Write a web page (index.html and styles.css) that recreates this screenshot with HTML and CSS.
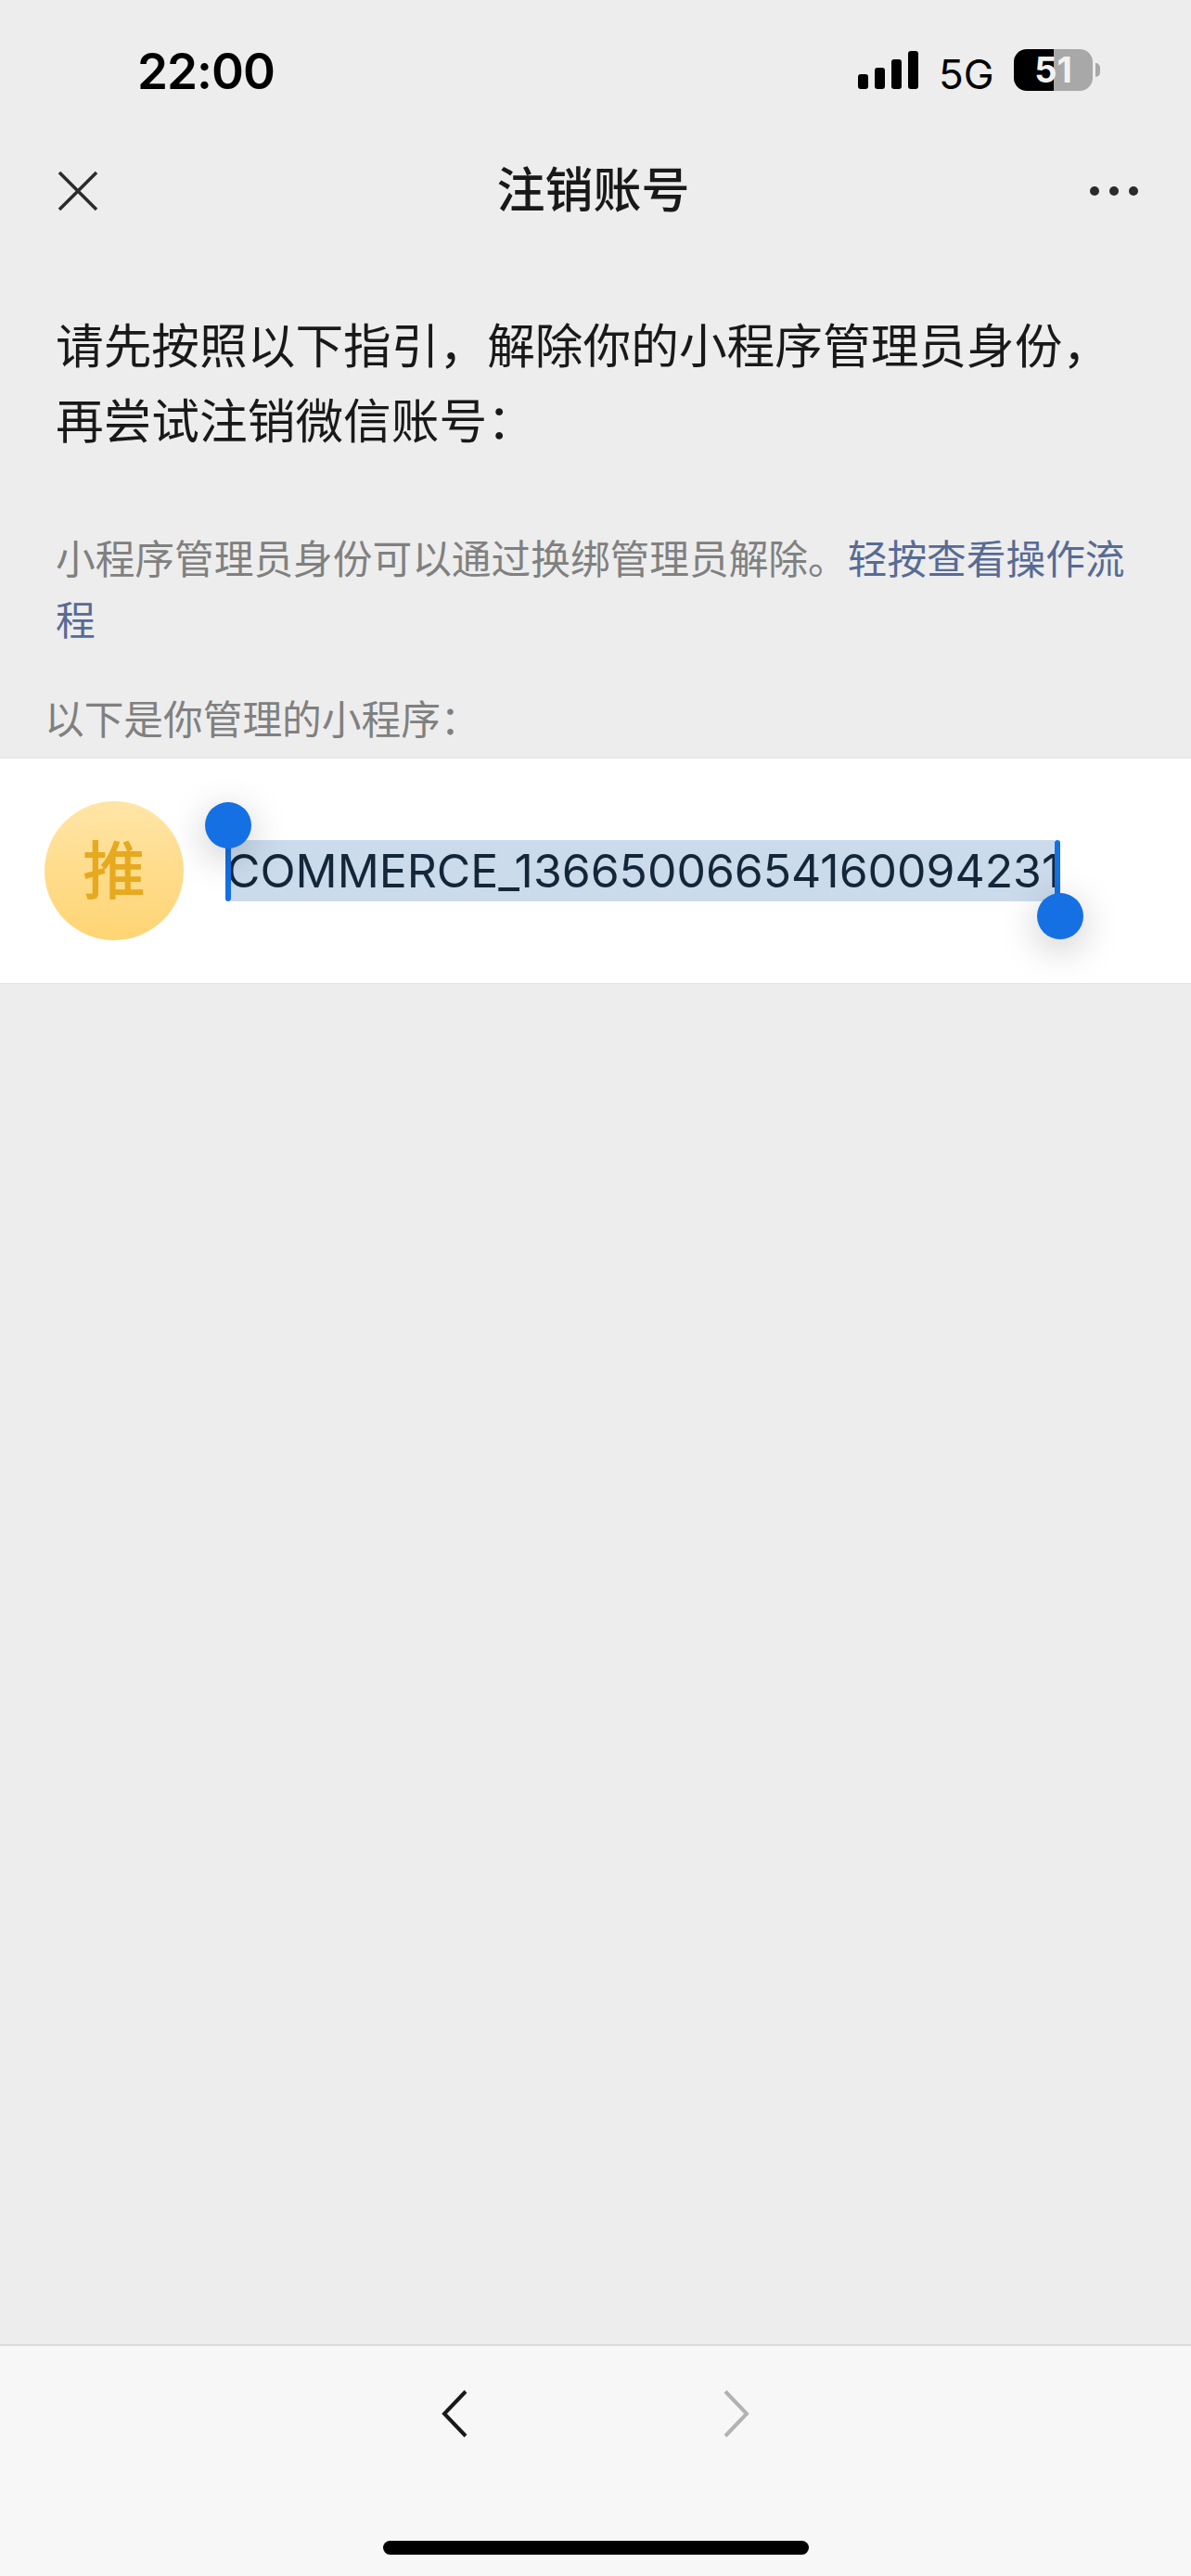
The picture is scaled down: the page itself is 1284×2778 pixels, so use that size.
FILE: index.html
```html
<!DOCTYPE html>
<html lang="zh-CN">
<head>
<meta charset="utf-8">
<title>注销账号</title>
<link rel="stylesheet" href="styles.css">
</head>
<body>
<div class="screen">
  <header class="status">
    <span class="time">22:00</span>
    <div class="status-right">
      <div class="signal"><i class="b1"></i><i class="b2"></i><i class="b3"></i><i class="b4"></i></div>
      <span class="net">5G</span>
      <div class="battery"><div class="cell"><span class="level">51</span></div><i class="nub"></i></div>
    </div>
  </header>
  <nav class="navbar">
    <svg class="close" viewBox="0 0 44 44" width="44" height="44"><path d="M2 2 L42 42 M42 2 L2 42" fill="none" stroke="#2b2b2b" stroke-width="3.6"/></svg>
    <h1 class="title">注销账号</h1>
    <div class="more"><i></i><i></i><i></i></div>
  </nav>
  <div class="lead"><p>请先按照以下指引，解除你的小程序管理员身份，</p><p>再尝试注销微信账号：</p></div>
  <div class="hint"><p><span>小程序管理员身份可以通过换绑管理员解除。</span><a class="link">轻按查看操作流</a></p><p><a class="link">程</a></p></div>
  <p class="label">以下是你管理的小程序：</p>
  <section class="row">
    <div class="avatar">推</div>
    <div class="selection">
      <span class="sel-text">COMMERCE_13665006654160094231</span>
      <i class="caret caret-l"></i><i class="knob knob-l"></i>
      <i class="caret caret-r"></i><i class="knob knob-r"></i>
    </div>
  </section>
  <div class="spacer"></div>
  <footer class="toolbar">
    <div class="arrows">
      <svg viewBox="0 0 30 52" width="30" height="52"><path d="M27 2 L4 26 L27 50" fill="none" stroke="#191919" stroke-width="4"/></svg>
      <svg viewBox="0 0 30 52" width="30" height="52"><path d="M3 2 L26 26 L3 50" fill="none" stroke="#b2b2b2" stroke-width="4"/></svg>
    </div>
    <div class="home"></div>
  </footer>
</div>
</body>
</html>
```
FILE: styles.css
```css
* { box-sizing: border-box; }
html, body { margin: 0; padding: 0; }
body { font-family: "Inter", "Noto Sans CJK SC", sans-serif; background: #ededed; }
.screen { width: 1284px; height: 2778px; display: flex; flex-direction: column; background: #ededed; overflow: hidden; }

.status { height: 150px; display: flex; justify-content: space-between; align-items: flex-start; padding: 0 98px 0 148px; }
.time { font-size: 53px; font-weight: 600; line-height: 60px; margin-top: 47px; color: #000; letter-spacing: -1px; }
.status-right { display: flex; align-items: flex-start; margin-top: 53px; }
.signal { display: flex; align-items: flex-end; gap: 7px; height: 43px; width: 65px; margin-right: 22px; }
.signal i { display: block; width: 11px; background: #000; border-radius: 3px; }
.b1 { height: 16px; } .b2 { height: 23px; } .b3 { height: 32px; } .b4 { height: 41px; }
.net { font-size: 44px; line-height: 44px; margin-top: 5px; width: 81px; color: #000; }
.battery { display: flex; align-items: center; height: 45px; }
.cell { width: 85px; height: 45px; border-radius: 14px; background: linear-gradient(to right, #000 0 43px, #a8a8a8 43px); display: flex; align-items: center; justify-content: center; }
.level { font-size: 38px; font-weight: 700; color: #f2f2f2; line-height: 45px; }
.nub { width: 5px; height: 15px; margin-left: 3px; background: #a8a8a8; border-radius: 0 8px 8px 0; }

.navbar { height: 112px; display: flex; align-items: center; justify-content: space-between; padding: 0 57px 0 62px; }
.close { display: block; }
.title { margin: 0 0 0 -2px; font-size: 52px; font-weight: 500; color: #191919; line-height: 60px; }
.more { display: flex; gap: 11px; }
.more i { display: block; width: 10px; height: 10px; border-radius: 50%; background: #2b2b2b; }

.lead { margin-top: 71px; padding: 0 60px; font-size: 51.7px; line-height: 81px; color: #191919; white-space: nowrap; }
.lead p { margin: 0; }
.hint { margin-top: 76px; padding: 0 60px; font-size: 42.7px; line-height: 66px; color: #808080; white-space: nowrap; }
.hint p { margin: 0; }
.link { color: #576b95; }
.label { margin: 44px 0 0; padding-left: 48px; font-size: 42.7px; line-height: 60px; color: #808080; }

.row { margin-top: 10px; height: 244px; background: #fff; border-top: 1px solid #e5e5e5; border-bottom: 1px solid #e5e5e5; display: flex; align-items: center; padding-left: 48px; }
.avatar { width: 150px; height: 150px; border-radius: 50%; background: linear-gradient(to bottom, #ffe5a6, #ffd473); color: #e6a91f; font-size: 68px; font-weight: 500; display: flex; align-items: center; justify-content: center; line-height: 1; flex: none; }
.selection { position: relative; margin-left: 51px; height: 66px; background: #cbdbec; display: flex; align-items: center; width: 888px; }
.sel-text { font-size: 49.9px; line-height: 66px; color: #13263a; white-space: nowrap; margin-left: -5px; }
.caret { position: absolute; width: 6px; background: #1570e3; }
.caret-l { left: -6px; top: 0; height: 66px; border-radius: 0 0 3px 3px; }
.caret-r { right: -6px; top: 0; height: 66px; border-radius: 3px 3px 0 0; }
.knob { position: absolute; width: 50px; height: 50px; border-radius: 50%; background: #1570e3; box-shadow: 0 10px 40px rgba(0, 0, 0, 0.22); }
.knob-l { left: -28px; top: -41px; }
.knob-r { right: -31px; top: 57px; }

.spacer { flex: 1; }
.toolbar { height: 250px; background: #f7f7f7; border-top: 2px solid #dcdcdc; display: flex; flex-direction: column; align-items: center; }
.arrows { display: flex; justify-content: space-between; width: 334px; margin-top: 47px; }
.arrows svg { display: block; }
.home { width: 459px; height: 15px; border-radius: 8px; background: #000; margin-top: 111px; }
```
